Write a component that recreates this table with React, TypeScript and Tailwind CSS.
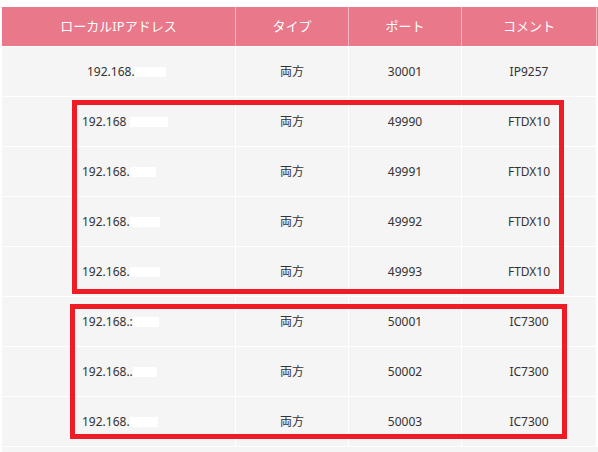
import React from 'react';

interface Row {
  ip: string;
  pad: string;
  mask: string;
  port: string;
  comment: string;
}

const rows: Row[] = [
  { ip: '192.168.', pad: 'pl-[85px]', mask: 'w-[31px]', port: '30001', comment: 'IP9257' },
  { ip: '192.168', pad: 'pl-[80px]', mask: 'w-[38px] ml-[4px]', port: '49990', comment: 'FTDX10' },
  { ip: '192.168.', pad: 'pl-[80px]', mask: 'w-[26px]', port: '49991', comment: 'FTDX10' },
  { ip: '192.168.', pad: 'pl-[80px]', mask: 'w-[30px]', port: '49992', comment: 'FTDX10' },
  { ip: '192.168.', pad: 'pl-[80px]', mask: 'w-[30px]', port: '49993', comment: 'FTDX10' },
  { ip: '192.168.:', pad: 'pl-[80px]', mask: 'w-[26px]', port: '50001', comment: 'IC7300' },
  { ip: '192.168..', pad: 'pl-[80px]', mask: 'w-[24px]', port: '50002', comment: 'IC7300' },
  { ip: '192.168.', pad: 'pl-[80px]', mask: 'w-[28px]', port: '50003', comment: 'IC7300' },
];

const cols = 'grid grid-cols-[234px_113px_113px_135px_60px]';

const App: React.FC = () => {
  return (
    <div
      className="relative w-[598px] h-[452px] overflow-hidden bg-white pl-[2px] pt-[7px] text-[#333]"
      style={{ fontFamily: '"Noto Sans", "Noto Sans CJK JP", sans-serif' }}
    >
      <div className="w-[655px]">
        <div className={`${cols} h-[39px] bg-[#e8788a] text-white text-[13px]`}>
          <div className="flex items-center justify-center border-r border-[#f3b5bf]">ローカルIPアドレス</div>
          <div className="flex items-center justify-center border-r border-[#f3b5bf]">タイプ</div>
          <div className="flex items-center justify-center border-r border-[#f3b5bf]">ポート</div>
          <div className="flex items-center justify-center border-r border-[#f3b5bf]">コメント</div>
          <div></div>
        </div>
        {rows.map((r, i) => (
          <div key={i} className={`${cols} h-[50px] bg-[#f5f5f5] border-t border-white text-[12px]`}>
            <div className={`flex items-center border-r border-white ${r.pad}`}>
              <span>{r.ip}</span>
              <span className={`inline-block h-[10px] bg-white ${r.mask}`}></span>
            </div>
            <div className="flex items-center justify-center border-r border-white">両方</div>
            <div className="flex items-center justify-center border-r border-white">{r.port}</div>
            <div className="flex items-center justify-center border-r border-white">{r.comment}</div>
            <div className="bg-white"></div>
          </div>
        ))}
        <div className="h-[20px] bg-[#f5f5f5] border-t border-white"></div>
      </div>

      {/* annotation boxes */}
      <div className="absolute left-[72px] top-[100px] w-[492px] h-[194px] border-[5px] border-[#ee1c25]"></div>
      <div className="absolute left-[70px] top-[304px] w-[497px] h-[135px] border-[5px] border-[#ee1c25]"></div>
    </div>
  );
};

export default App;
